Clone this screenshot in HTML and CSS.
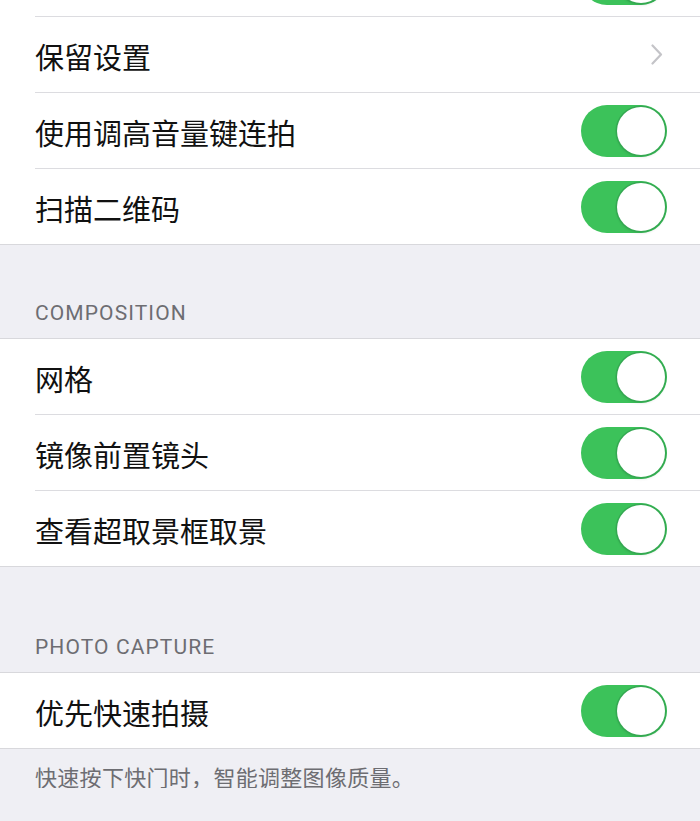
FILE: index.html
```html
<!DOCTYPE html>
<html lang="zh-CN">
<head>
    <meta charset="UTF-8">
    <meta name="viewport" content="width=device-width, initial-scale=1.0">
    <title>相机设置</title>
    <link rel="stylesheet" href="styles.css">
</head>
<body>
    <div id="settings">
        <!-- top group, scrolled partly out of view -->
        <div class="group first">
            <div class="cell">
                <div class="cell-body">
                    <span class="label"></span>
                    <span class="toggle on"><span class="knob"></span></span>
                </div>
            </div>
            <div class="cell">
                <div class="cell-body">
                    <span class="label">保留设置</span>
                    <span class="chevron">
                        <svg width="12" height="21" viewBox="0 0 12 21"><polyline points="1.5,1.5 10,10.5 1.5,19.5" fill="none" stroke="#c4c4c8" stroke-width="2.2" stroke-linecap="round" stroke-linejoin="round"/></svg>
                    </span>
                </div>
            </div>
            <div class="cell">
                <div class="cell-body">
                    <span class="label">使用调高音量键连拍</span>
                    <span class="toggle on"><span class="knob"></span></span>
                </div>
            </div>
            <div class="cell">
                <div class="cell-body">
                    <span class="label">扫描二维码</span>
                    <span class="toggle on"><span class="knob"></span></span>
                </div>
            </div>
        </div>

        <div class="section-header">COMPOSITION</div>
        <div class="group">
            <div class="cell">
                <div class="cell-body">
                    <span class="label">网格</span>
                    <span class="toggle on"><span class="knob"></span></span>
                </div>
            </div>
            <div class="cell">
                <div class="cell-body">
                    <span class="label">镜像前置镜头</span>
                    <span class="toggle on"><span class="knob"></span></span>
                </div>
            </div>
            <div class="cell">
                <div class="cell-body">
                    <span class="label">查看超取景框取景</span>
                    <span class="toggle on"><span class="knob"></span></span>
                </div>
            </div>
        </div>

        <div class="section-header tall">PHOTO CAPTURE</div>
        <div class="group">
            <div class="cell">
                <div class="cell-body">
                    <span class="label">优先快速拍摄</span>
                    <span class="toggle on"><span class="knob"></span></span>
                </div>
            </div>
        </div>
        <div class="section-footer">快速按下快门时，智能调整图像质量。</div>
    </div>
</body>
</html>
```

FILE: styles.css
```css
body {
    margin: 0;
    background: #efeff4;
    font-family: "Noto Sans CJK SC", "Roboto", sans-serif;
    color: #000;
    overflow: hidden;
}

#settings {
    width: 700px;
}

.group {
    background: #fff;
    border-top: 1px solid #d8d8dc;
    border-bottom: 1px solid #d8d8dc;
}
.group.first {
    margin-top: -60px;
}

.cell {
    padding-left: 35px;
}
.cell-body {
    height: 75px;
    display: flex;
    align-items: center;
    justify-content: space-between;
    padding-right: 33px;
    border-bottom: 1px solid #dcdce0;
}
.cell:last-child .cell-body {
    border-bottom: none;
}

.label {
    font-size: 29px;
    line-height: 30px;
    padding-top: 3px;
    color: #111;
}

.chevron {
    display: flex;
    margin-right: 4px;
}

.toggle {
    position: relative;
    width: 86px;
    height: 52px;
    border-radius: 26px;
    background: #3cc25a;
    flex-shrink: 0;
}
.toggle .knob {
    position: absolute;
    top: 2px;
    right: 2px;
    width: 48px;
    height: 48px;
    border-radius: 50%;
    background: #fff;
    box-shadow: 0 0 0 1.5px #34a851, 0 2px 3px rgba(0, 0, 0, 0.12);
}

.section-header {
    font-family: "Roboto", sans-serif;
    font-size: 21px;
    line-height: 21px;
    letter-spacing: 1.1px;
    color: #6d6d72;
    padding: 0 35px 14px;
    height: 93px;
    box-sizing: border-box;
    display: flex;
    align-items: flex-end;
}
.section-header.tall {
    height: 105px;
}

.section-footer {
    font-size: 22px;
    line-height: 24px;
    letter-spacing: 0.3px;
    color: #6d6d72;
    padding: 15px 35px 0;
}
```
